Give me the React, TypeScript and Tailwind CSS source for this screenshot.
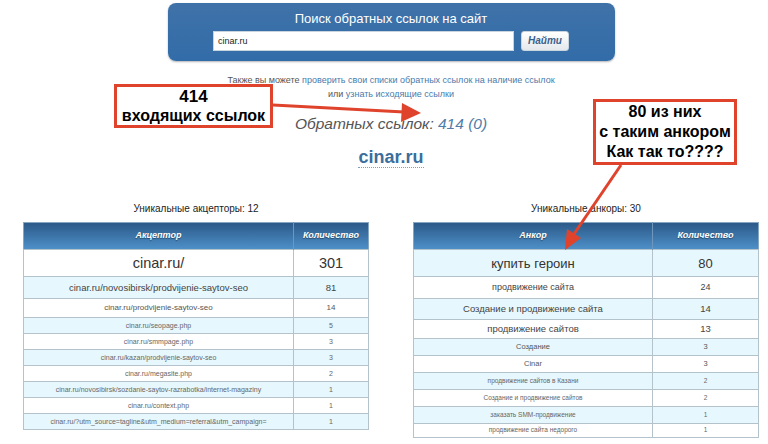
import React from 'react';

type Row = { name: string; count: string; h: string; fs: string; color: string };

const acceptors: Row[] = [
  { name: 'cinar.ru/', count: '301', h: 'h-[27px]', fs: 'text-[14.5px]', color: 'text-[#333]' },
  { name: 'cinar.ru/novosibirsk/prodvijenie-saytov-seo', count: '81', h: 'h-[22px]', fs: 'text-[9.5px]', color: 'text-[#444]' },
  { name: 'cinar.ru/prodvijenie-saytov-seo', count: '14', h: 'h-[19px]', fs: 'text-[8px]', color: 'text-[#555]' },
  { name: 'cinar.ru/seopage.php', count: '5', h: 'h-[16px]', fs: 'text-[7px]', color: 'text-[#666]' },
  { name: 'cinar.ru/smmpage.php', count: '3', h: 'h-[16px]', fs: 'text-[7px]', color: 'text-[#666]' },
  { name: 'cinar.ru/kazan/prodvijenie-saytov-seo', count: '3', h: 'h-[16px]', fs: 'text-[7px]', color: 'text-[#666]' },
  { name: 'cinar.ru/megasite.php', count: '2', h: 'h-[16px]', fs: 'text-[7px]', color: 'text-[#666]' },
  { name: 'cinar.ru/novosibirsk/sozdanie-saytov-razrabotka/internet-magaziny', count: '1', h: 'h-[16px]', fs: 'text-[7px]', color: 'text-[#666]' },
  { name: 'cinar.ru/context.php', count: '1', h: 'h-[16px]', fs: 'text-[7px]', color: 'text-[#666]' },
  { name: 'cinar.ru/?utm_source=tagline&utm_medium=referral&utm_campaign=', count: '1', h: 'h-[16px]', fs: 'text-[7px]', color: 'text-[#666]' },
];

const anchors: Row[] = [
  { name: 'купить героин', count: '80', h: 'h-[27px]', fs: 'text-[13px]', color: 'text-[#333]' },
  { name: 'продвижение сайта', count: '24', h: 'h-[22px]', fs: 'text-[9px]', color: 'text-[#444]' },
  { name: 'Создание и продвижение сайта', count: '14', h: 'h-[21px]', fs: 'text-[9.5px]', color: 'text-[#444]' },
  { name: 'продвижение сайтов', count: '13', h: 'h-[19px]', fs: 'text-[9.5px]', color: 'text-[#444]' },
  { name: 'Создание', count: '3', h: 'h-[17px]', fs: 'text-[7.5px]', color: 'text-[#555]' },
  { name: 'Cinar', count: '3', h: 'h-[17px]', fs: 'text-[7.5px]', color: 'text-[#555]' },
  { name: 'продвижение сайтов в Казани', count: '2', h: 'h-[17px]', fs: 'text-[6.5px]', color: 'text-[#666]' },
  { name: 'Создание и продвижение сайтов', count: '2', h: 'h-[17px]', fs: 'text-[6.5px]', color: 'text-[#666]' },
  { name: 'заказать SMM-продвижение', count: '1', h: 'h-[17px]', fs: 'text-[6.5px]', color: 'text-[#666]' },
  { name: 'продвижение сайта недорого', count: '1', h: 'h-[14px]', fs: 'text-[6.5px]', color: 'text-[#666]' },
];

function DataTable({ title, head, rows, firstW, blueFirst }: { title: string; head: string; rows: Row[]; firstW: string; blueFirst: boolean }) {
  return (
    <div className="w-[346px] flex flex-col">
      <div className="text-[10px] leading-[14px] text-[#222] text-center">{title}</div>
      <table className="mt-[6px] w-[346px] table-fixed border-collapse border border-[#86a7c2]">
        <colgroup>
          <col className={firstW} />
          <col />
        </colgroup>
        <thead>
          <tr className="h-[27px] bg-gradient-to-b from-[#2c5a89] to-[#4f92cb]">
            <th className="text-center text-[9px] font-bold italic text-white [text-shadow:0_1px_1px_rgba(0,0,0,0.4)] border-r border-[#6f97bd]">{head}</th>
            <th className="text-center text-[9px] font-bold italic text-white [text-shadow:0_1px_1px_rgba(0,0,0,0.4)]">Количество</th>
          </tr>
        </thead>
        <tbody>
          {rows.map((r, i) => {
            const blue = blueFirst ? i % 2 === 0 : i % 2 === 1;
            return (
              <tr key={i} className={`${r.h} ${blue ? 'bg-[#e6f7fd]' : 'bg-white'}`}>
                <td className={`${r.fs} ${r.color} text-center leading-none whitespace-nowrap overflow-hidden border border-[#b4c2cc] p-0`}>{r.name}</td>
                <td className={`${r.fs} ${r.color} text-center leading-none border border-[#b4c2cc] p-0`}>{r.count}</td>
              </tr>
            );
          })}
        </tbody>
      </table>
    </div>
  );
}

export default function App() {
  return (
    <div className="relative w-[768px] h-[444px] overflow-hidden bg-white font-['Liberation_Sans',Arial,sans-serif]">
      <div className="ml-[23px] w-[736px] flex flex-col items-center text-center">
        {/* search panel */}
        <div className="mt-[3px] w-[447px] h-[58px] rounded-[8px] bg-gradient-to-b from-[#3f72a8] to-[#326ca8] shadow-[0_1px_2px_rgba(0,0,0,0.3)] pt-[8px] flex flex-col items-center">
          <div className="text-[13px] leading-[16px] text-white">Поиск обратных ссылок на сайт</div>
          <div className="mt-[4px] flex gap-[7px]">
            <div className="w-[301px] h-[20px] bg-white border border-[#c8d4de] text-[9px] text-[#222] text-left pl-[4px] leading-[18px]">cinar.ru</div>
            <div className="w-[48px] h-[20px] rounded-[3px] bg-gradient-to-b from-white to-[#e4e8ec] border border-[#c8d4de] text-[10px] font-bold italic text-[#3b5f8c] leading-[18px]">Найти</div>
          </div>
        </div>

        <div className="mt-[12px] text-[9px] leading-[14px] text-[#555]">
          Также вы можете <span className="text-[#4a7aab]">проверить свои списки обратных ссылок на наличие ссылок</span>
        </div>
        <div className="text-[9px] leading-[14px] text-[#555]">
          или <span className="text-[#4a7aab]">узнать исходящие ссылки</span>
        </div>

        <div className="mt-[13px] text-[15.5px] leading-[20px] italic text-[#555]">
          Обратных ссылок: <span className="text-[#4f7ca8]">414 (0)</span>
        </div>

        <div className="mt-[12px] h-[22px]">
          <span className="inline-block text-[18px] leading-[20px] font-bold text-[#3c6e9c] border-b border-dotted border-[#7f9fbd]">cinar.ru</span>
        </div>

        <div className="mt-[34px] w-[736px] flex justify-between text-left">
          <DataTable title="Уникальные акцепторы: 12" head="Акцептор" rows={acceptors} firstW="w-[270px]" blueFirst={false} />
          <DataTable title="Уникальные анкоры: 30" head="Анкор" rows={anchors} firstW="w-[239px]" blueFirst={true} />
        </div>
      </div>

      {/* annotations */}
      <div className="absolute left-[114px] top-[84px] w-[159px] h-[44px] border-[3px] border-[#e0432c] bg-white flex flex-col items-center justify-center text-black font-bold">
        <div className="text-[17px] leading-[19px]">414</div>
        <div className="text-[16px] leading-[19px]">входящих ссылок</div>
      </div>
      <div className="absolute left-[593px] top-[99px] w-[144px] h-[66px] border-[3px] border-[#e0432c] bg-white flex flex-col items-center justify-center text-black font-bold text-[16px] leading-[20px]">
        <div>80 из них</div>
        <div>с таким анкором</div>
        <div>Как так то????</div>
      </div>
      <svg className="absolute left-0 top-0 pointer-events-none" width="768" height="444" viewBox="0 0 768 444">
        <line x1="273" y1="105" x2="404" y2="112" stroke="#e0432c" strokeWidth="3" />
        <polygon points="421,113 402,103 401,122" fill="#e0432c" />
        <line x1="621" y1="165" x2="574" y2="234" stroke="#e0432c" strokeWidth="3" />
        <polygon points="565,250 567,229 581,238" fill="#e0432c" />
      </svg>
    </div>
  );
}
